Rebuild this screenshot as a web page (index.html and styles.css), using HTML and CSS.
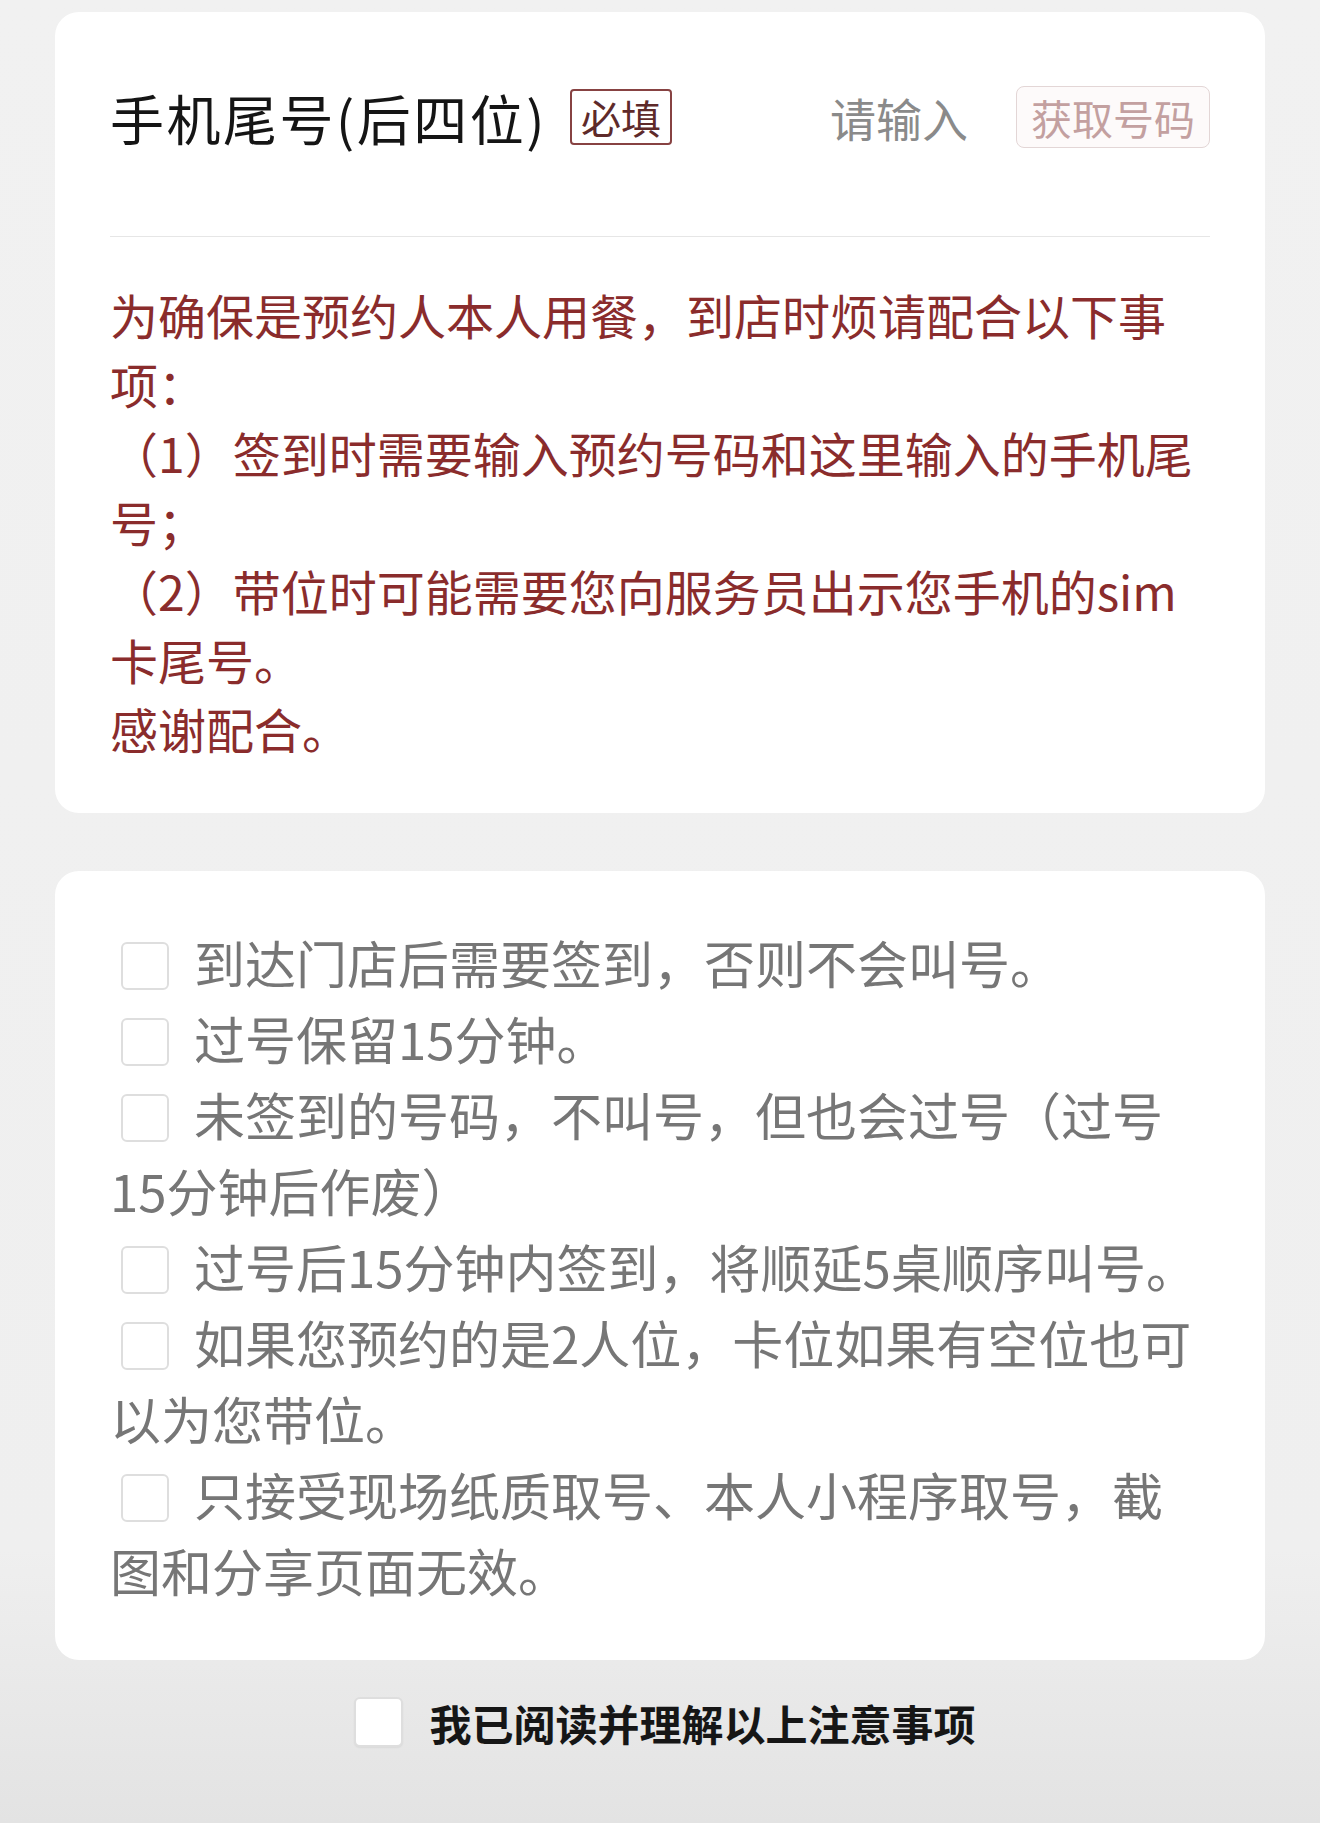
FILE: index.html
```html
<!DOCTYPE html>
<html lang="zh-CN">
<head>
  <meta charset="UTF-8">
  <title>排队取号 - 注意事项</title>
  <link rel="stylesheet" href="styles.css">
</head>
<body>

  <div class="page">

    <!-- 手机尾号 + 提示 -->
    <div class="card card-phone">
      <div class="field-row">
        <span class="field-label">手机尾号(后四位)</span>
        <span class="badge">必填</span>
        <span class="field-input">请输入</span>
        <button class="get-code">获取号码</button>
      </div>
      <div class="divider"></div>
      <p class="notice">为确保是预约人本人用餐，到店时烦请配合以下事项：<br>（1）签到时需要输入预约号码和这里输入的手机尾号；<br>（2）带位时可能需要您向服务员出示您手机的sim卡尾号。<br>感谢配合。</p>
    </div>

    <!-- 注意事项列表 -->
    <div class="card card-rules">
      <p class="rule"><span class="check"></span>到达门店后需要签到，否则不会叫号。</p>
      <p class="rule"><span class="check"></span>过号保留15分钟。</p>
      <p class="rule"><span class="check"></span>未签到的号码，不叫号，但也会过号（过号15分钟后作废）</p>
      <p class="rule"><span class="check"></span>过号后15分钟内签到，将顺延5桌顺序叫号。</p>
      <p class="rule"><span class="check"></span>如果您预约的是2人位，卡位如果有空位也可以为您带位。</p>
      <p class="rule"><span class="check"></span>只接受现场纸质取号、本人小程序取号，截图和分享页面无效。</p>
    </div>

    <label class="agree">
      <span class="check check-agree"></span>
      <span class="agree-text">我已阅读并理解以上注意事项</span>
    </label>

  </div>

</body>
</html>
```

FILE: styles.css
```css
body {
  margin: 0;
  min-height: 1823px;
  background: linear-gradient(#f1f1f1 0%, #efefef 85%, #e3e3e3 100%);
  font-family: "Noto Sans CJK SC", "Noto Sans", sans-serif;
}

.page {
  padding: 12px 55px 0;
}

/* 白色卡片 */
.card {
  background: #fff;
  border-radius: 24px;
}

.card-phone {
  padding: 74px 55px 50px;
}

/* 输入行 */
.field-row {
  display: flex;
  align-items: center;
  height: 62px;
}

.field-label {
  font-size: 54px;
  color: #151515;
  letter-spacing: 2.5px;
}

.badge {
  margin-left: 23px;
  padding: 0 9px;
  height: 52px;
  line-height: 52px;
  font-size: 40px;
  color: #5e2a2a;
  border: 2px solid #874242;
  border-radius: 4px;
}

.field-input {
  margin-left: auto;
  font-size: 46px;
  color: #8a8a8a;
}

.get-code {
  margin-left: 48px;
  padding: 0 14px;
  height: 62px;
  font-family: inherit;
  font-size: 41px;
  color: #c3a0a0;
  background: #fdfafa;
  border: 1px solid #e3d6d6;
  border-radius: 8px;
}

.divider {
  margin-top: 88px;
  height: 1px;
  background: #e6e6e6;
}

.notice {
  margin: 43px 0 0;
  font-size: 48px;
  line-height: 69px;
  color: #8a2c2c;
}

/* 注意事项 */
.card-rules {
  margin-top: 58px;
  padding: 53px 55px 52px;
}

.rule {
  margin: 0;
  font-size: 51px;
  line-height: 76px;
  color: #767676;
}

.check {
  display: inline-block;
  box-sizing: border-box;
  width: 48px;
  height: 48px;
  margin: 0 25px 0 11px;
  vertical-align: -6px;
  background: #fff;
  border: 2px solid #dedede;
  border-radius: 6px;
}

/* 底部确认 */
.agree {
  display: flex;
  align-items: center;
  justify-content: center;
  margin-top: 37px;
  padding-left: 10px;
  height: 50px;
}

.check-agree {
  margin: 0 26px 0 0;
  width: 49px;
  height: 50px;
  box-shadow: 0 1px 2px rgba(0, 0, 0, 0.06);
}

.agree-text {
  font-size: 42px;
  font-weight: bold;
  color: #161616;
}
```
